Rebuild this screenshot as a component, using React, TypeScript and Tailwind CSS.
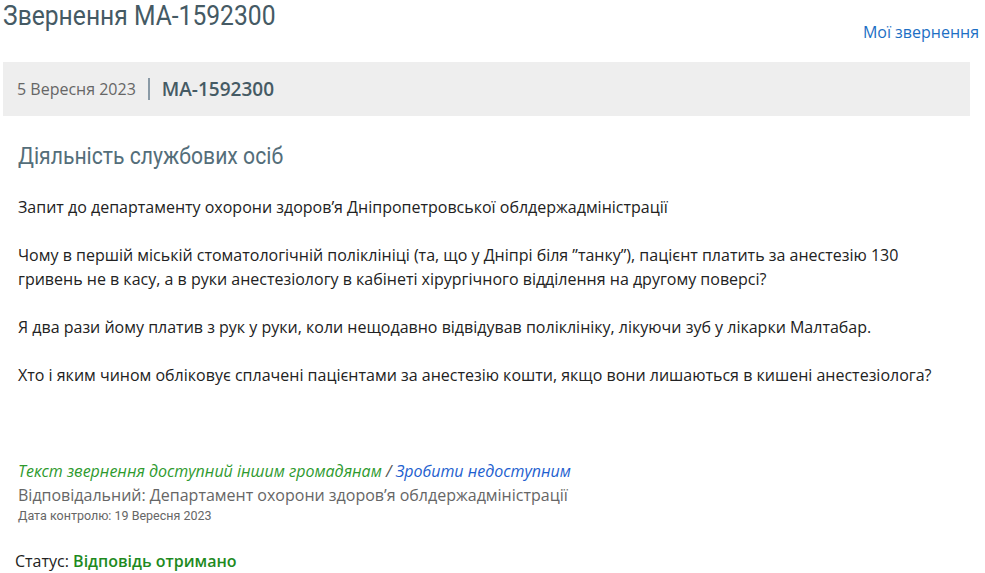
export default function App() {
  return (
    <div className="w-[985px] h-[573px] overflow-hidden bg-white font-['Open_Sans',sans-serif] text-[#333]">
      <div className="flex items-start justify-between pr-[6px]">
        <h1 className="pl-[3px] pt-[1px] font-['Roboto',sans-serif] text-[28px] leading-[30px] text-[#455a64]">
          <span className="inline-block origin-left scale-x-[0.88] whitespace-nowrap">Звернення МА-1592300</span>
        </h1>
        <a className="mt-[21px] text-[16px] leading-[22px] text-[#1d6fc4]">Мої звернення</a>
      </div>

      <div className="mt-[19px] ml-[3px] flex h-[54px] w-[967px] items-center bg-[#eeeeee] pl-[14px]">
        <span className="text-[16px] text-[#666]">5 Вересня 2023</span>
        <span className="mx-[12px] h-[22px] w-[2px] bg-[#8a9aa6]" />
        <span className="text-[19px] font-semibold text-[#455a64]">МА-1592300</span>
      </div>

      <div className="pl-[18px]">
        <h2 className="mt-[26px] font-['Roboto',sans-serif] text-[23px] leading-[30px] text-[#546e7a]">
          <span className="inline-block origin-left scale-x-[0.92] whitespace-nowrap">Діяльність службових осіб</span>
        </h2>
        <div className="mt-[23px] flex w-[925px] flex-col gap-[24px] text-[16px] leading-[24px] text-[#222]">
          <p>Запит до департаменту охорони здоров’я Дніпропетровської облдержадміністрації</p>
          <p>
            Чому в першій міській стоматологічній поліклініці (та, що у Дніпрі біля ”танку”), пацієнт платить за
            анестезію 130 гривень не в касу, а в руки анестезіологу в кабінеті хірургічного відділення на другому
            поверсі?
          </p>
          <p>Я два рази йому платив з рук у руки, коли нещодавно відвідував поліклініку, лікуючи зуб у лікарки Малтабар.</p>
          <p>Хто і яким чином обліковує сплачені пацієнтами за анестезію кошти, якщо вони лишаються в кишені анестезіолога?</p>
        </div>

        <div className="mt-[72px] text-[16px] italic leading-[24px]">
          <span className="text-[#2e9a2e]">Текст звернення доступний іншим громадянам</span>
          <span className="text-[#555]"> / </span>
          <a className="text-[#1e5fcf]">Зробити недоступним</a>
        </div>
        <div className="text-[16px] leading-[24px] text-[#666]">
          Відповідальний: Департамент охорони здоров’я облдержадміністрації
        </div>
        <div className="font-['Roboto',sans-serif] text-[12.5px] leading-[18px] text-[#666]">
          Дата контролю: 19 Вересня 2023
        </div>
      </div>

      <div className="mt-[24px] pl-[15px] text-[16px] leading-[24px] text-[#222]">
        Статус: <span className="font-semibold text-[#1e8a1e]">Відповідь отримано</span>
      </div>
    </div>
  );
}
